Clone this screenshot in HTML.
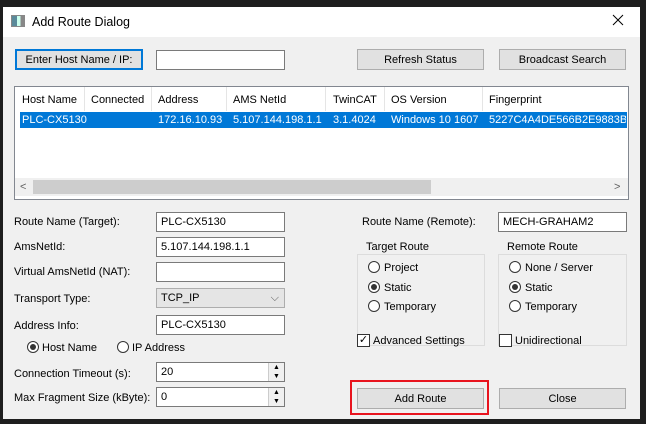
<!DOCTYPE html>
<html><head><style>
*{box-sizing:border-box;margin:0;padding:0}
body{width:646px;height:424px;background:#1e1e1e;position:relative;overflow:hidden;font-family:"Liberation Sans",sans-serif;font-size:11px;color:#000}
.a{position:absolute}
.win{left:3px;top:7px;width:637px;height:412px;background:#f0f0f0}
.title{left:3px;top:7px;width:637px;height:30px;background:#fff}
.btn{position:absolute;background:#e1e1e1;border:1px solid #adadad;text-align:center;line-height:20px;height:21px}
.in{position:absolute;background:#fff;border:1px solid #7a7a7a;height:20px;padding-left:4px;line-height:19px}
.lbl{position:absolute;white-space:nowrap;margin-top:1px}
.rad{position:absolute;width:12px;height:12px;border:1px solid #333;border-radius:50%;background:#fff}
.rad.on::after{content:"";position:absolute;left:2px;top:2px;width:6px;height:6px;border-radius:50%;background:#333}
.grp{position:absolute;border:1px solid #dcdcdc}
.gt{position:absolute;background:#f0f0f0;padding:0 2px}
.hd{position:absolute;top:94px}
.sep{position:absolute;top:87px;width:1px;height:24px;background:#e5e5e5}
.cell{position:absolute;top:114px;color:#fff}
</style></head><body>
<div class="a win"></div>
<div class="a title"></div>
<div class="a" style="left:11px;top:15px;width:14px;height:12px;border:1px solid #888;background:linear-gradient(90deg,#5a8a9a 0 40%,#cfe 40% 70%,#888 70%)"></div>
<div class="lbl" style="left:32px;top:14px;font-size:12.5px">Add Route Dialog</div>
<svg class="a" style="left:612px;top:14px" width="12" height="12"><path d="M1 1L11 11M11 1L1 11" stroke="#000" stroke-width="1"/></svg>

<div class="btn" style="left:15px;top:49px;width:128px;border:2px solid #0078d7;line-height:18px">Enter Host Name / IP:</div>
<div class="in" style="left:156px;top:50px;width:129px"></div>
<div class="btn" style="left:357px;top:49px;width:127px">Refresh Status</div>
<div class="btn" style="left:499px;top:49px;width:127px">Broadcast Search</div>

<div class="a" style="left:14px;top:86px;width:615px;height:114px;background:#fff;border:1px solid #828790"></div>
<div class="sep" style="left:84px"></div><div class="sep" style="left:151px"></div><div class="sep" style="left:226px"></div><div class="sep" style="left:325px"></div><div class="sep" style="left:384px"></div><div class="sep" style="left:482px"></div>
<div class="hd" style="left:22px">Host Name</div><div class="hd" style="left:91px">Connected</div><div class="hd" style="left:158px">Address</div><div class="hd" style="left:233px">AMS NetId</div><div class="hd" style="left:333px">TwinCAT</div><div class="hd" style="left:391px">OS Version</div><div class="hd" style="left:489px">Fingerprint</div>
<div class="a" style="left:20px;top:112px;width:607px;height:16px;background:#0078d7"></div>
<div class="cell" style="left:22px">PLC-CX5130</div><div class="cell" style="left:158px">172.16.10.93</div><div class="cell" style="left:233px">5.107.144.198.1.1</div><div class="cell" style="left:333px">3.1.4024</div><div class="cell" style="left:391px">Windows 10 1607</div><div class="cell" style="left:489px;width:137px;overflow:hidden;white-space:nowrap">5227C4A4DE566B2E9883B2</div>
<div class="a" style="left:15px;top:178px;width:613px;height:18px;background:#f0f0f0"></div>
<div class="a" style="left:33px;top:180px;width:398px;height:14px;background:#cdcdcd"></div>
<div class="lbl" style="left:20px;top:180px;color:#606060">&lt;</div>
<div class="lbl" style="left:614px;top:180px;color:#606060">&gt;</div>

<div class="lbl" style="left:14px;top:215px">Route Name (Target):</div>
<div class="in" style="left:156px;top:212px;width:129px">PLC-CX5130</div>
<div class="lbl" style="left:14px;top:240px">AmsNetId:</div>
<div class="in" style="left:156px;top:237px;width:129px">5.107.144.198.1.1</div>
<div class="lbl" style="left:14px;top:265px">Virtual AmsNetId (NAT):</div>
<div class="in" style="left:156px;top:262px;width:129px"></div>
<div class="lbl" style="left:14px;top:292px">Transport Type:</div>
<div class="in" style="left:156px;top:288px;width:129px;background:#e5e5e5;border-color:#adadad">TCP_IP<span style="position:absolute;right:5px;top:0;color:#555">⌵</span></div>
<div class="lbl" style="left:14px;top:319px">Address Info:</div>
<div class="in" style="left:156px;top:315px;width:129px">PLC-CX5130</div>
<div class="rad on" style="left:27px;top:341px"></div><div class="lbl" style="left:42px;top:341px">Host Name</div>
<div class="rad" style="left:117px;top:341px"></div><div class="lbl" style="left:132px;top:341px">IP Address</div>
<div class="lbl" style="left:14px;top:367px">Connection Timeout (s):</div>
<div class="in" style="left:156px;top:362px;width:129px">20</div>
<div class="lbl" style="left:14px;top:391px">Max Fragment Size (kByte):</div>
<div class="in" style="left:156px;top:387px;width:129px">0</div>
<div class="a" style="left:268px;top:363px;width:16px;height:18px;background:#f0f0f0;border-left:1px solid #ccc;font-size:7px;line-height:9px;text-align:center">▲<br>▼</div>
<div class="a" style="left:268px;top:388px;width:16px;height:18px;background:#f0f0f0;border-left:1px solid #ccc;font-size:7px;line-height:9px;text-align:center">▲<br>▼</div>

<div class="lbl" style="left:362px;top:215px">Route Name (Remote):</div>
<div class="in" style="left:498px;top:212px;width:129px">MECH-GRAHAM2</div>
<div class="grp" style="left:357px;top:254px;width:128px;height:92px"></div>
<div class="gt" style="left:364px;top:241px">Target Route</div>
<div class="rad" style="left:368px;top:261px"></div><div class="lbl" style="left:384px;top:261px">Project</div>
<div class="rad on" style="left:368px;top:281px"></div><div class="lbl" style="left:384px;top:281px">Static</div>
<div class="rad" style="left:368px;top:300px"></div><div class="lbl" style="left:384px;top:300px">Temporary</div>
<div class="grp" style="left:498px;top:254px;width:129px;height:92px"></div>
<div class="gt" style="left:505px;top:241px">Remote Route</div>
<div class="rad" style="left:509px;top:261px"></div><div class="lbl" style="left:525px;top:261px">None / Server</div>
<div class="rad on" style="left:509px;top:281px"></div><div class="lbl" style="left:525px;top:281px">Static</div>
<div class="rad" style="left:509px;top:300px"></div><div class="lbl" style="left:525px;top:300px">Temporary</div>
<div class="a" style="left:357px;top:334px;width:13px;height:13px;border:1px solid #333;background:#fff;font-size:11px;line-height:11px;text-align:center">✓</div>
<div class="lbl" style="left:373px;top:334px">Advanced Settings</div>
<div class="a" style="left:499px;top:334px;width:13px;height:13px;border:1px solid #333;background:#fff"></div>
<div class="lbl" style="left:515px;top:334px">Unidirectional</div>

<div class="a" style="left:350px;top:380px;width:139px;height:35px;border:2px solid #e8141e"></div>
<div class="btn" style="left:357px;top:388px;width:127px">Add Route</div>
<div class="btn" style="left:499px;top:388px;width:127px">Close</div>
</body></html>
